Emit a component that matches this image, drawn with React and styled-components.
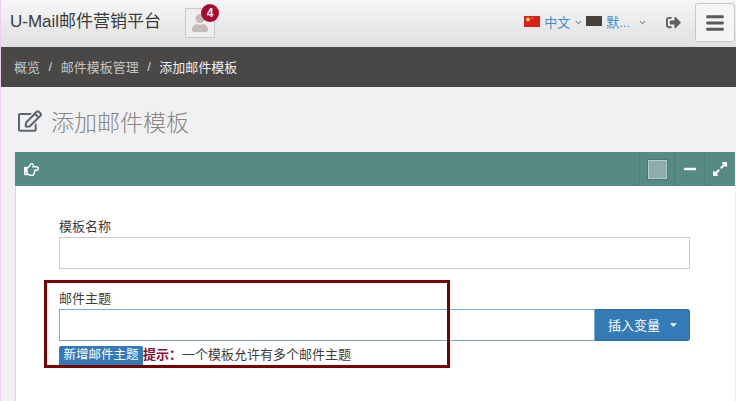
import React from 'react';
import styled, { createGlobalStyle } from 'styled-components';
import { FaRegEdit, FaRegHandPointRight, FaSignOutAlt, FaBars, FaExpandAlt, FaMinus, FaUser, FaChevronDown, FaCaretDown } from 'react-icons/fa';

const Global = createGlobalStyle`
  html, body { margin: 0; padding: 0; height: 100%; overflow: hidden; background: #f1f1f1; }
  body { font-family: "Liberation Sans", "Noto Sans CJK SC", sans-serif; color: #333; }
  * { box-sizing: border-box; }
`;
const Page = styled.div`
  position: relative; width: 736px; height: 401px; overflow: hidden;
  border-left: 1px solid #edcdf0; background: #f1f1f1;
`;
const Navbar = styled.header`
  height: 47px; display: flex; align-items: center; padding: 0 1px 0 9px;
  background: linear-gradient(#f6f6f6, #e0e0e0);
`;
const Brand = styled.div`
  font-size: 17px; color: #3a3a3a; width: 175px; margin-top: -8px; white-space: nowrap;
`;
const Notify = styled.div`
  position: relative; width: 30px; height: 30px; margin-top: -1px;
  display: flex; align-items: center; justify-content: center;
  border: 1px solid #c9c9c9; background: #eee; color: #c7b9b7; font-size: 18px;
`;
const Badge = styled.span`
  position: absolute; top: -5px; right: -5px; width: 18px; height: 18px; border-radius: 50%;
  background: #a50b30; color: #fff; font-size: 12px; font-weight: 700;
  display: flex; align-items: center; justify-content: center;
`;
const NavRight = styled.div`
  margin-left: auto; display: flex; align-items: center; height: 100%; margin-top: -2px;
`;
const LangGroup = styled.div`
  display: flex; align-items: center; margin-bottom: 3px;
`;
const NavLink = styled.span`
  color: #428bca; font-size: 13px; white-space: nowrap;
`;
const Chevron = styled.span`
  display: flex; color: #7d97ad; font-size: 7px; margin-left: ${p => p.$left}px; margin-top: 2px;
`;
const Swatch = styled.span`
  width: 16px; height: 10px; background: #4a403a; margin: 0 4px 0 4px;
`;
const Logout = styled.span`
  display: flex; color: #5f5f5f; font-size: 15px; margin: 0 14px 0 20px;
`;
const Toggle = styled.button`
  width: 40px; height: 39px; border: 1px solid #c8c8c8; border-radius: 3px; background: #f5f5f5;
  color: #5a5a5a; font-size: 20px; display: flex; align-items: center; justify-content: center; padding: 0;
`;
const Crumbs = styled.nav`
  height: 40px; background: #4a4847; display: flex; align-items: center; padding: 0 0 2px 13px;
  font-size: 13px; color: #c4c4c4;
`;
const Sep = styled.span`
  margin: 0 8.5px; color: #d0d0d0;
`;
const Current = styled.span`color: #f0f0f0;`;
const Title = styled.h1`
  height: 65px; margin: 0; padding: 2px 0 0 17px; display: flex; align-items: center;
  font-weight: 300; font-size: 23px; color: #868686; gap: 9px;
  svg { color: #5c6670; font-size: 24px; }
`;
const Panel = styled.section`
  margin: 0 1px 0 14px; height: 249px; background: #fff;
  border-left: 1px solid #d8d8e4;
`;
const PanelHead = styled.div`
  height: 34px; margin-left: -1px; background: #558a85; display: flex; align-items: stretch; color: #fff;
`;
const HeadIcon = styled.span`
  display: flex; align-items: center; padding-left: 9px; font-size: 15px; margin-right: auto;
`;
const HeadBtn = styled.span`
  width: ${p => p.$w}px; display: flex; align-items: center; justify-content: center;
  border-left: 1px solid #4d7f7a; font-size: ${p => p.$size}px;
`;
const ColorBox = styled.span`
  width: 19px; height: 19px; background: #8cadaa; border: 1px solid #b6cdcb; outline: 1px solid #4a7773;
`;
const PanelBody = styled.div`
  padding: 32px 45px 0 43px;
`;
const Field = styled.div`
  margin-bottom: 21px;
`;
const Label = styled.label`
  display: block; font-size: 13px; line-height: 18px; height: 19px; color: #3c3c3c;
`;
const Input = styled.div`
  height: 32px; border: 1px solid ${p => p.$focus ? '#7aa9cf' : '#ccc'}; background: #fff; flex: 1;
`;
const Group = styled.div`
  display: flex;
`;
const AddonBtn = styled.button`
  width: 95px; height: 32px; background: #337ab7; color: #fff; border: 1px solid #2e6da4; border-left: 0;
  border-radius: 0 3px 3px 0; font: inherit; font-size: 13px; padding: 0 0 2px 3px;
  display: flex; align-items: center; justify-content: center; gap: 8px;
  svg { font-size: 11px; }
`;
const Hint = styled.div`
  display: flex; align-items: flex-start; height: 20px; margin-top: 5px; font-size: 13px; line-height: 17px;
  white-space: nowrap; color: #3c3c3c;
`;
const AddBtn = styled.span`
  width: 84px; height: 20px; background: #337ab7; color: #fff; border-radius: 2px 2px 0 0;
  display: flex; align-items: center; justify-content: center; font-size: 12.5px; padding-bottom: 1px;
`;
const HintKey = styled.b`
  color: #8a1030; font-weight: 700;
`;
const Annotation = styled.div`
  position: absolute; left: 43px; top: 280px; width: 406px; height: 88px;
  border: 3px solid #7a0000; pointer-events: none;
`;

const Flag = () => (
  <svg width="16" height="11" viewBox="0 0 16 11" style={{ marginRight: 4 }}>
    <rect width="16" height="11" fill="#d8201c" />
    <circle cx="4" cy="3.5" r="2" fill="#f7d046" />
    <circle cx="8" cy="2" r=".7" fill="#f7d046" />
  </svg>
);

export default function App() {
  return (
    <Page>
      <Global />
      <Navbar>
        <Brand>U-Mail邮件营销平台</Brand>
        <Notify><FaUser /><Badge>4</Badge></Notify>
        <NavRight>
          <LangGroup>
            <Flag />
            <NavLink>中文</NavLink>
            <Chevron $left={5}><FaChevronDown /></Chevron>
            <Swatch />
            <NavLink>默...</NavLink>
            <Chevron $left={9}><FaChevronDown /></Chevron>
          </LangGroup>
          <Logout><FaSignOutAlt /></Logout>
          <Toggle><FaBars /></Toggle>
        </NavRight>
      </Navbar>
      <Crumbs>
        概览<Sep>/</Sep>邮件模板管理<Sep>/</Sep><Current>添加邮件模板</Current>
      </Crumbs>
      <Title><FaRegEdit />添加邮件模板</Title>
      <Panel>
        <PanelHead>
          <HeadIcon><FaRegHandPointRight /></HeadIcon>
          <HeadBtn $w={35}><ColorBox /></HeadBtn>
          <HeadBtn $w={30} $size={14}><FaMinus /></HeadBtn>
          <HeadBtn $w={31} $size={16}><FaExpandAlt /></HeadBtn>
        </PanelHead>
        <PanelBody>
          <Field>
            <Label>模板名称</Label>
            <Input />
          </Field>
          <Field>
            <Label>邮件主题</Label>
            <Group>
              <Input $focus />
              <AddonBtn>插入变量 <FaCaretDown /></AddonBtn>
            </Group>
            <Hint>
              <AddBtn>新增邮件主题</AddBtn>
              <HintKey>提示：</HintKey>一个模板允许有多个邮件主题
            </Hint>
          </Field>
        </PanelBody>
      </Panel>
      <Annotation />
    </Page>
  );
}
